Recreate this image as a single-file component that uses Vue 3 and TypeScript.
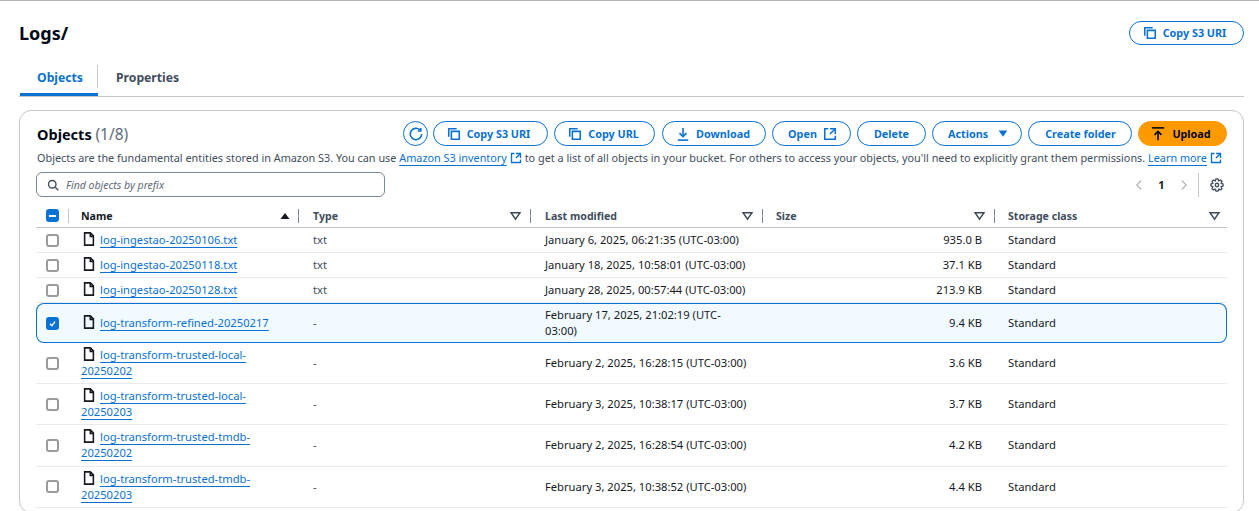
<script setup lang="ts">
interface Row { name: string; type: string; modified: string; size: string; selected?: boolean; tall?: boolean }
const rows: Row[] = [
  { name: 'log-ingestao-20250106.txt', type: 'txt', modified: 'January 6, 2025, 06:21:35 (UTC-03:00)', size: '935.0 B' },
  { name: 'log-ingestao-20250118.txt', type: 'txt', modified: 'January 18, 2025, 10:58:01 (UTC-03:00)', size: '37.1 KB' },
  { name: 'log-ingestao-20250128.txt', type: 'txt', modified: 'January 28, 2025, 00:57:44 (UTC-03:00)', size: '213.9 KB' },
  { name: 'log-transform-refined-20250217', type: '-', modified: 'February 17, 2025, 21:02:19 (UTC-03:00)', size: '9.4 KB', selected: true },
  { name: 'log-transform-trusted-local-20250202', type: '-', modified: 'February 2, 2025, 16:28:15 (UTC-03:00)', size: '3.6 KB', tall: true },
  { name: 'log-transform-trusted-local-20250203', type: '-', modified: 'February 3, 2025, 10:38:17 (UTC-03:00)', size: '3.7 KB', tall: true },
  { name: 'log-transform-trusted-tmdb-20250202', type: '-', modified: 'February 2, 2025, 16:28:54 (UTC-03:00)', size: '4.2 KB', tall: true },
  { name: 'log-transform-trusted-tmdb-20250203', type: '-', modified: 'February 3, 2025, 10:38:52 (UTC-03:00)', size: '4.4 KB', tall: true },
]
const columns = ['Type', 'Last modified', 'Size', 'Storage class']

function gearPath(): string {
  const pts: string[] = []
  const teeth = 8
  for (let i = 0; i < teeth; i++) {
    const a = (i / teeth) * Math.PI * 2
    const w = Math.PI / teeth
    const list: [number, number][] = [
      [a - w * 0.95, 5.1], [a - w * 0.42, 7], [a + w * 0.42, 7], [a + w * 0.95, 5.1],
    ]
    for (const [ang, r] of list) pts.push(`${(8 + r * Math.cos(ang)).toFixed(2)} ${(8 + r * Math.sin(ang)).toFixed(2)}`)
  }
  return 'M' + pts.join('L') + 'Z'
}
const gear = gearPath()
</script>

<template>
  <div class="page">
    <header class="title-row">
      <h1>Logs/</h1>
      <button class="btn top-copy">
        <svg class="ic" viewBox="0 0 16 16"><path d="M2 11V2h9" /><path d="M5 5h9v9H5z" /></svg>
        Copy S3 URI
      </button>
    </header>

    <nav class="tabs">
      <div class="tab active">Objects</div>
      <div class="tab">Properties</div>
    </nav>

    <section class="card">
      <div class="card-head">
        <h2>Objects <span>(1/8)</span></h2>
        <div class="actions">
          <button class="btn round">
            <svg class="ic" viewBox="0 0 16 16"><path d="M14.5 8a6.5 6.5 0 1 1-2-4.7" /><path d="M13.5 1v3.5H10" /></svg>
          </button>
          <button class="btn w115">
            <svg class="ic" viewBox="0 0 16 16"><path d="M2 11V2h9" /><path d="M5 5h9v9H5z" /></svg>
            Copy S3 URI
          </button>
          <button class="btn w101">
            <svg class="ic" viewBox="0 0 16 16"><path d="M2 11V2h9" /><path d="M5 5h9v9H5z" /></svg>
            Copy URL
          </button>
          <button class="btn w104">
            <svg class="ic" viewBox="0 0 16 16"><path d="M8 1v10" /><path d="M4 7l4 4 4-4" /><path d="M2 15h12" /></svg>
            Download
          </button>
          <button class="btn w79">
            Open
            <svg class="ic" viewBox="0 0 16 16"><path d="M14 8V2H8" /><path d="M14 2 8 8" /><path d="M6 2H2v12h12v-4" /></svg>
          </button>
          <button class="btn w69">Delete</button>
          <button class="btn w90">
            Actions
            <svg class="ic caret" viewBox="0 0 16 16"><path d="M3 4h10l-5 7z" /></svg>
          </button>
          <button class="btn w104c">Create folder</button>
          <button class="btn primary w89">
            <svg class="ic" viewBox="0 0 16 16"><path d="M8 15V5" /><path d="M4 9l4-4 4 4" /><path d="M1 1h14" /></svg>
            Upload
          </button>
        </div>
      </div>

      <p class="desc">
        Objects are the fundamental entities stored in Amazon S3. You can use
        <a>Amazon S3 inventory</a>
        <svg class="ic ext" viewBox="0 0 16 16"><path d="M14 8V2H8" /><path d="M14 2 8 8" /><path d="M6 2H2v12h12v-4" /></svg>
        to get a list of all objects in your bucket. For others to access your objects, you'll need to explicitly grant them permissions.
        <a>Learn more</a>
        <svg class="ic ext" viewBox="0 0 16 16"><path d="M14 8V2H8" /><path d="M14 2 8 8" /><path d="M6 2H2v12h12v-4" /></svg>
      </p>

      <div class="filter-row">
        <div class="search">
          <svg class="ic search-ic" viewBox="0 0 16 16"><circle cx="7" cy="7" r="5" /><path d="m11 11 4 4" /></svg>
          <span>Find objects by prefix</span>
        </div>
        <div class="pager">
          <svg class="ic muted" viewBox="0 0 16 16"><path d="M11 2 5 8l6 6" /></svg>
          <b>1</b>
          <svg class="ic muted" viewBox="0 0 16 16"><path d="m5 2 6 6-6 6" /></svg>
          <i class="vsep"></i>
          <svg class="ic dark" viewBox="0 0 16 16"><path :d="gear" /><circle cx="8" cy="8" r="2" /></svg>
        </div>
      </div>

      <div class="table">
        <div class="grid thead">
          <div class="cell check"><span class="box indeterminate"><i></i></span><i class="hsep first"></i></div>
          <div class="th">
            <span>Name</span>
            <svg class="sort" viewBox="0 0 16 16"><path d="M8 4l6 8H2z" /></svg>
            <i class="hsep"></i>
          </div>
          <div v-for="c in columns" :key="c" class="th">
            <span>{{ c }}</span>
            <svg class="ic filter" viewBox="0 0 16 16"><path d="M2.5 4.5h11L8 12.5z" /></svg>
            <i v-if="c !== 'Storage class'" class="hsep"></i>
          </div>
        </div>

        <div v-for="r in rows" :key="r.name" class="grid row" :class="{ selected: r.selected, tall: r.tall }">
          <div class="cell check">
            <span class="box" :class="{ checked: r.selected }">
              <svg v-if="r.selected" viewBox="0 0 14 14"><path d="M3 7.5 6 10.5 11 4" /></svg>
            </span>
          </div>
          <div class="cell name">
            <svg class="ic file" viewBox="0 0 16 16"><path d="M9.5 1H3v14h10V4.5z" /><path d="M9.5 1v4h3.5" /></svg>
            <a>{{ r.name }}</a>
          </div>
          <div class="cell type">{{ r.type }}</div>
          <div class="cell"><span :class="{ narrow: r.selected }">{{ r.modified }}</span></div>
          <div class="cell size">{{ r.size }}</div>
          <div class="cell last">Standard</div>
        </div>
      </div>
    </section>
  </div>
</template>

<style>
html, body { margin: 0; background: #fff; overflow: hidden; }
</style>

<style scoped>
.page {
  box-sizing: border-box;
  width: 1259px;
  height: 511px;
  overflow: hidden;
  border-top: 1px solid #b4b4bb;
  padding: 0 15px 0 19px;
  font-family: "Noto Sans", "Open Sans", sans-serif;
  font-size: 11.2px;
  line-height: 16px;
  color: #16191f;
}
.title-row { display: flex; justify-content: space-between; align-items: center; height: 24px; margin-top: 20px; }
h1 { margin: 0; font-size: 18px; line-height: 24px; font-weight: 700; color: #000716; }
.tabs { display: flex; height: 31px; margin-top: 20px; border-bottom: 1px solid #c6c6cd; position: relative; }
.tab { font-size: 12.2px; font-weight: 700; color: #414d5c; padding: 5px 18px 0 18px; position: relative; }
.tab.active { color: #0972d3; width: 78px; box-sizing: border-box; margin-left: 1px; padding-left: 17px; border-bottom: 3px solid #0972d3; height: 31px; }
.tab.active::after { content: ""; position: absolute; right: 0; top: 0; height: 23px; width: 1px; background: #c6c6cd; }
.card {
  margin-top: 13px;
  height: 403px;
  box-sizing: border-box;
  border: 1px solid #c6c6cd;
  border-radius: 12px;
  padding: 10px 16px 0 16px;
}
.card-head { display: flex; justify-content: space-between; align-items: center; height: 25px; }
h2 { margin: 0 0 0 1px; font-size: 14.5px; line-height: 20px; font-weight: 700; color: #000716; }
h2 span { font-weight: 400; font-size: 15.5px; color: #5f6b7a; }
.actions { display: flex; gap: 6px; align-items: center; }
.btn {
  box-sizing: border-box;
  height: 25px;
  display: inline-flex;
  align-items: center;
  justify-content: center;
  gap: 6px;
  padding: 0;
  background: #fff;
  border: 1px solid #0972d3;
  border-radius: 13px;
  color: #0972d3;
  font: 700 10.8px/14px "Noto Sans", "Open Sans", sans-serif;
  white-space: nowrap;
}
.round { width: 25px; margin-right: -1px; }
.w115 { width: 115px; padding-right: 4px; }
.w101 { width: 101px; padding-right: 2px; }
.w104 { width: 104px; margin-left: 1px; padding-right: 2px; }
.w79 { width: 79px; padding-left: 2px; }
.w69 { width: 69px; }
.w90 { width: 90px; padding-left: 4px; }
.w104c { width: 104px; padding-left: 1px; }
.w89 { width: 89px; padding-right: 3px; }
.top-copy { width: 115px; height: 24px; padding-right: 4px; }
.primary { background: #ff9900; border-color: #ff9900; color: #000716; gap: 7px; }
.ic { width: 14px; height: 14px; fill: none; stroke: currentColor; stroke-width: 1.8; flex: none; }
.caret { fill: currentColor; stroke: none; margin-left: 2px; }
.desc { margin: 4px 0 0 1px; height: 16px; font-size: 10.85px; line-height: 16px; color: #414d5c; white-space: nowrap; }
.desc a, .name a { color: #0972d3; text-decoration: underline; text-underline-offset: 3px; text-decoration-thickness: 1px; }
.ext { color: #0972d3; width: 12px; height: 12px; vertical-align: -2px; margin-left: 3px; }
.filter-row { display: flex; justify-content: space-between; align-items: center; margin-top: 6px; height: 25px; }
.search {
  box-sizing: border-box;
  width: 349px;
  height: 25px;
  border: 1px solid #7d8998;
  border-radius: 6px;
  display: flex;
  align-items: center;
  gap: 7px;
  padding-left: 10px;
  color: #5f6b7a;
  font-style: italic;
  font-size: 10.5px;
}
.search-ic { width: 12px; height: 12px; color: #414d5c; stroke-width: 1.8; }
.pager { display: flex; align-items: center; height: 25px; }
.pager b { width: 33px; text-align: center; font-size: 11px; color: #16191f; }
.pager .muted { color: #b4b4bb; width: 12px; height: 12px; stroke-width: 1.6; }
.vsep { width: 1px; height: 24px; background: #c6c6cd; margin: 0 11px 0 8px; }
.dark { color: #414d5c; width: 14px; height: 14px; stroke-width: 1.5; margin-right: 3px; }
.table { margin-top: 7px; width: 1191px; }
.grid { display: grid; grid-template-columns: 33px 230px 232px 232px 232px 232px; box-sizing: border-box; }
.thead { height: 24px; border-bottom: 1px solid #c6c6cd; }
.th {
  display: flex;
  align-items: center;
  justify-content: space-between;
  padding: 0 32px 0 14px;
  position: relative;
  font-weight: 700;
  font-size: 10.6px;
  color: #414d5c;
}
.thead .th:nth-child(2) { padding: 0 14px 0 12px; color: #16191f; }
.thead .th:nth-child(5) { padding-left: 13px; }
.thead .th:last-child { padding: 0 6px 0 13px; }
.sort { width: 12px; height: 12px; fill: #16191f; }
.thead .th:nth-child(2) .sort { margin-right: -6px; }
.filter { width: 13px; height: 13px; color: #414d5c; stroke-width: 1.8; margin-right: -23px; }
.thead .th:last-child .filter { margin-right: 0; }
.hsep { position: absolute; right: 0; top: 5px; height: 14px; width: 1px; background: #7d8998; }
.hsep.first { background: #c6c6cd; }
.row { border-bottom: 1px solid #e9ebed; height: 25px; align-items: center; }
.row.tall { height: 41.2px; }
.row.selected { background: #f1faff; box-shadow: inset 0 0 0 1px #0972d3; border-radius: 8px; border-bottom: 0; height: 40px; }
.cell { padding: 0 14px; color: #16191f; position: relative; }
.check { padding: 0 0 0 10px; height: 100%; display: flex; align-items: center; box-sizing: border-box; align-self: stretch; }
.box {
  box-sizing: border-box;
  width: 13px;
  height: 13px;
  border: 2px solid #9a9a9f;
  border-radius: 3px;
  background: #fff;
  display: flex;
  align-items: center;
  justify-content: center;
}
.box.checked, .box.indeterminate { background: #0972d3; border-color: #0972d3; }
.box.indeterminate i { width: 7px; height: 2px; background: #fff; }
.box svg { width: 11px; height: 11px; fill: none; stroke: #fff; stroke-width: 2; }
.name { padding: 0 12px; }
.file { width: 14px; height: 14px; color: #16191f; stroke-width: 1.8; margin: 0 4px 0 1px; vertical-align: -2px; }
.type { color: #414d5c; }
.size { text-align: right; padding-right: 13px; }
.last { padding-left: 13px; }
.narrow { display: block; width: 180px; }
</style>
